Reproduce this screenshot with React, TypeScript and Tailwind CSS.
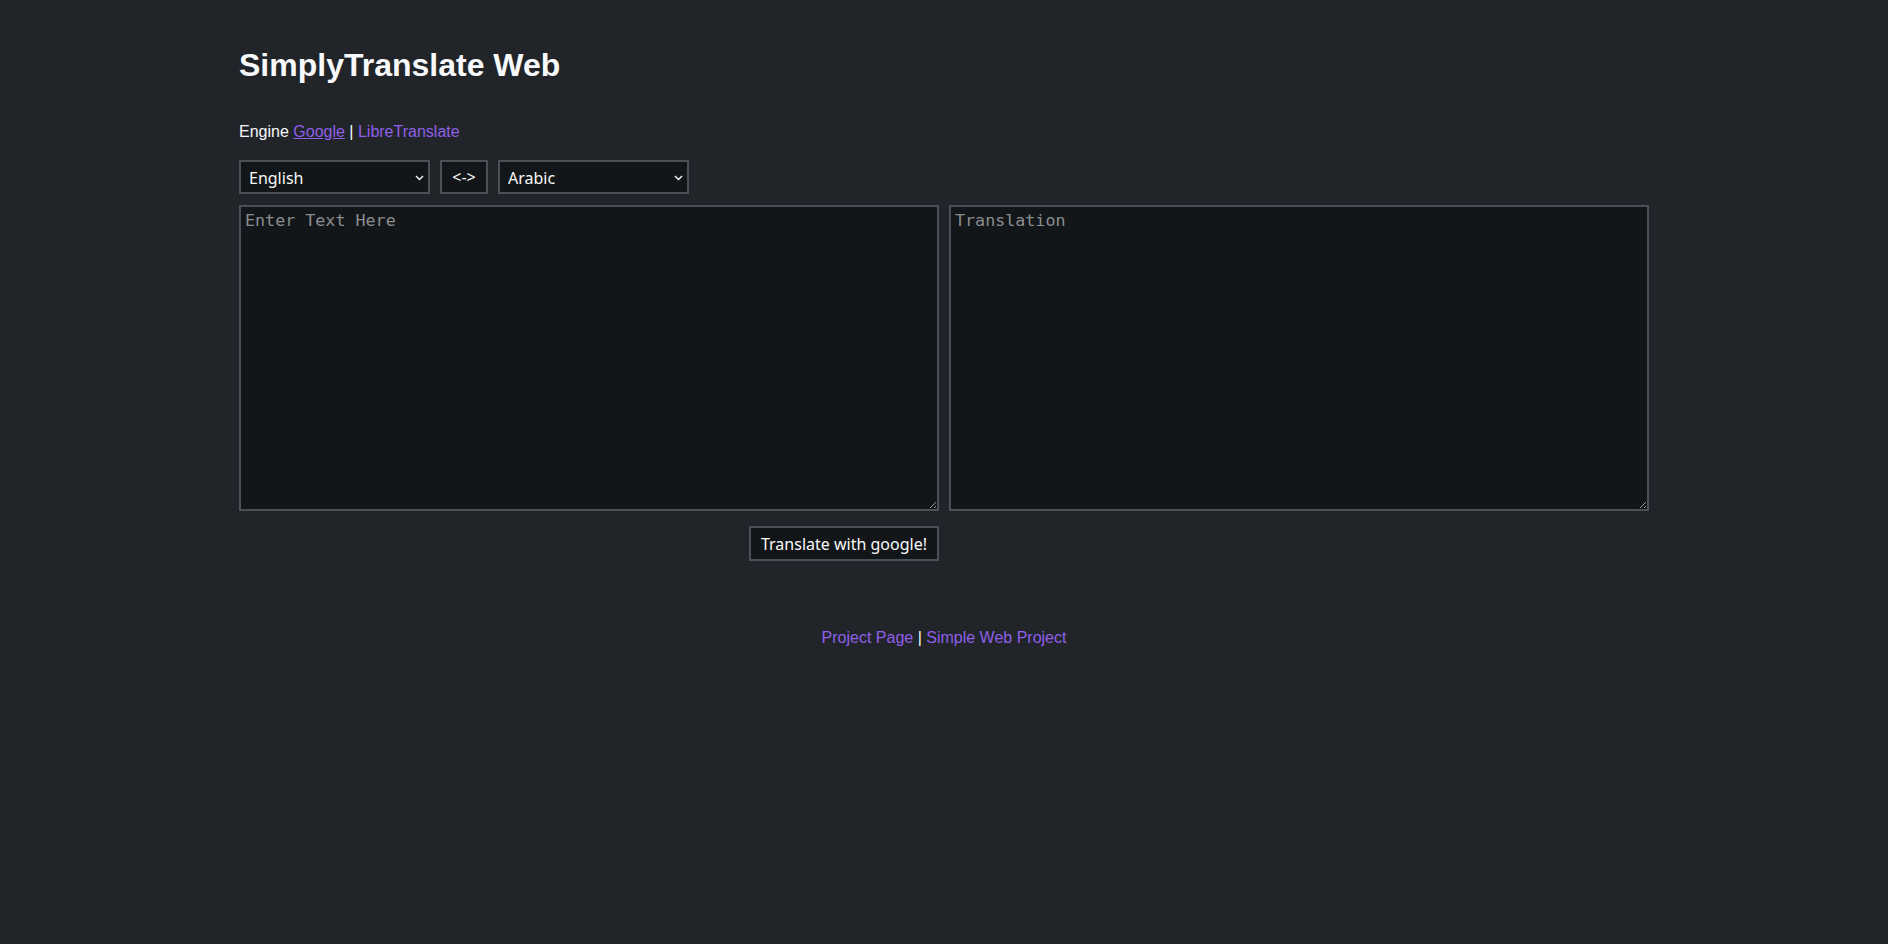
import React from "react";

const languages = ["Autodetect", "English", "Arabic", "French", "German", "Spanish"];

function LangSelect({ value, options }: { value: string; options: string[] }) {
  return (
    <div className="relative">
      <select
        defaultValue={value}
        className="appearance-none block w-[191px] h-[34px] pl-2 pr-6 pt-[2px] bg-[#131618] border-2 border-[#495057] text-[16px] font-['Noto_Sans',sans-serif] text-[#f8f9fa]"
      >
        {options.map((l) => (
          <option key={l}>{l}</option>
        ))}
      </select>
      <svg
        width="9"
        height="6"
        viewBox="0 0 9 6"
        className="absolute right-[6px] top-[15px] pointer-events-none"
      >
        <polyline points="1,1 4.5,4.5 8,1" fill="none" stroke="#f8f9fa" strokeWidth="1.4" />
      </svg>
    </div>
  );
}

export default function App() {
  return (
    <div className="min-h-screen bg-[#212529] text-[#f8f9fa] font-['Liberation_Sans',Arial,sans-serif] [color-scheme:dark]">
      <div className="w-[1410px] mx-auto pt-[47px]">
        <h1 className="text-[32px] leading-[37px] font-bold">SimplyTranslate Web</h1>

        <p className="mt-[39px] text-[16px] leading-[18px]">
          Engine{" "}
          <a href="#" className="text-[#8f5fe8] underline">
            Google
          </a>{" "}
          |{" "}
          <a href="#" className="text-[#8f5fe8]">
            LibreTranslate
          </a>
        </p>

        {/* language pickers */}
        <div className="mt-[19px] flex items-center gap-[10px]">
          <LangSelect value="English" options={languages} />
          <button className="w-[48px] h-[34px] bg-[#131618] border-2 border-[#495057] text-[16px] font-['Noto_Sans',sans-serif] text-[#f8f9fa]">
            {"<->"}
          </button>
          <LangSelect value="Arabic" options={languages.slice(1)} />
        </div>

        {/* input / output */}
        <div className="mt-[11px] flex gap-[10px]">
          <textarea
            placeholder="Enter Text Here"
            className="w-[700px] h-[306px] px-[4px] pt-[1px] pb-[2px] bg-[#131618] border-2 border-[#495057] text-[16.7px] font-['DejaVu_Sans_Mono',monospace] text-[#f8f9fa] placeholder:text-[#8a8d90] resize"
          />
          <textarea
            placeholder="Translation"
            readOnly
            className="w-[700px] h-[306px] px-[4px] pt-[1px] pb-[2px] bg-[#131618] border-2 border-[#495057] text-[16.7px] font-['DejaVu_Sans_Mono',monospace] text-[#f8f9fa] placeholder:text-[#8a8d90] resize"
          />
        </div>

        <div className="mt-[15px] w-[700px] flex justify-end">
          <button className="w-[190px] h-[35px] bg-[#131618] border-2 border-[#495057] text-[16px] font-['Noto_Sans',sans-serif] text-[#f8f9fa]">
            Translate with google!
          </button>
        </div>
      </div>

      <p className="mt-[68px] text-center text-[16px] leading-[18px]">
        <a href="#" className="text-[#8f5fe8]">
          Project Page
        </a>{" "}
        |{" "}
        <a href="#" className="text-[#8f5fe8]">
          Simple Web Project
        </a>
      </p>
    </div>
  );
}
